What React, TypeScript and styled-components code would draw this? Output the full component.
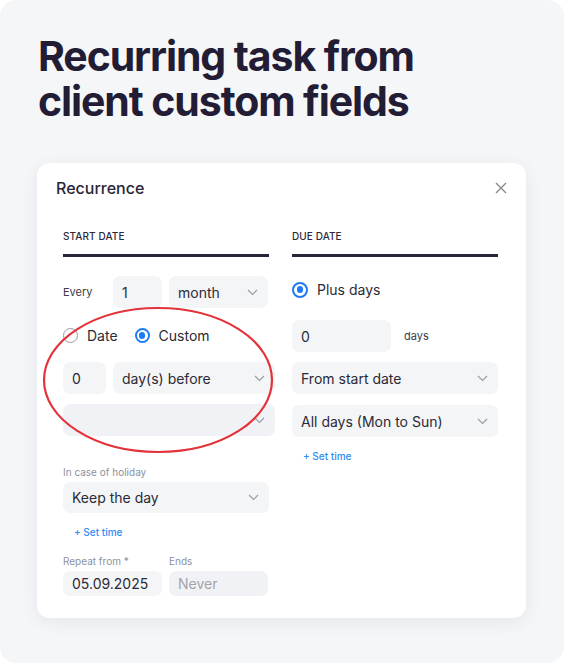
import React from "react";
import styled, { createGlobalStyle } from "styled-components";

const Global = createGlobalStyle`
  html, body { margin: 0; padding: 0; background: #ffffff; }
  body { font-family: Inter, "Noto Sans", sans-serif; -webkit-font-smoothing: antialiased; }
  * { box-sizing: border-box; }
`;

const Page = styled.div`
  width: 564px;
  height: 663px;
  background: #f5f6f8;
  border-radius: 16px;
  padding: 34px 0 0 37px;
  display: flex;
  flex-direction: column;
`;

const Title = styled.h1`
  margin: 0 0 0 1px;
  font-family: Inter, sans-serif;
  font-weight: 700;
  font-size: 41px;
  line-height: 45px;
  letter-spacing: -1.1px;
  color: #231c35;
`;

const Card = styled.div`
  position: relative;
  margin-top: 39px;
  width: 489px;
  height: 455px;
  background: #ffffff;
  border-radius: 13px;
  box-shadow: 0 4px 18px rgba(30, 30, 60, 0.07);
  padding: 0 28px 0 26px;
`;

const Header = styled.div`
  height: 50px;
  display: flex;
  align-items: center;
  justify-content: space-between;
  margin-left: -7px;
  margin-right: -11px;
`;

const CardTitle = styled.div`
  font-size: 16px;
  font-weight: 500;
  color: #272636;
`;

const Close = styled.div`
  width: 16px;
  height: 16px;
  display: flex;
  align-items: center;
  justify-content: center;
`;

const Columns = styled.div`
  display: grid;
  grid-template-columns: 206px 206px;
  column-gap: 23px;
`;

const Col = styled.div`
  display: flex;
  flex-direction: column;
`;

const ColHead = styled.div`
  padding-top: 17px;
  height: 44px;
  border-bottom: 3px solid #2a2438;
  font-size: 10px;
  font-weight: 500;
  letter-spacing: 0.1px;
  color: #2c2a3a;
  line-height: 12px;
`;

const Row = styled.div<{ $mt: number; $gap?: number }>`
  display: flex;
  align-items: center;
  margin-top: ${(p) => p.$mt}px;
  gap: ${(p) => p.$gap ?? 0}px;
`;

const SmallLabel = styled.span<{ $w?: number }>`
  font-size: 11px;
  color: #3a3a48;
  width: ${(p) => (p.$w ? `${p.$w}px` : "auto")};
  flex: none;
`;

const Field = styled.div<{ $w?: string; $h?: number; $muted?: boolean }>`
  width: ${(p) => p.$w ?? "100%"};
  height: ${(p) => p.$h ?? 32}px;
  flex: none;
  background: ${(p) => (p.$muted ? "#f1f2f5" : "#f4f5f7")};
  border-radius: 7px;
  display: flex;
  align-items: center;
  justify-content: space-between;
  padding: 0 10px 0 9px;
  font-size: 14px;
  color: ${(p) => (p.$muted ? "#a3a4ab" : "#2b2a36")};
`;

const Chevron = () => (
  <svg width="11" height="7" viewBox="0 0 11 7">
    <path d="M1 1l4.5 4.5L10 1" fill="none" stroke="#9a9ca6" strokeWidth="1.2" />
  </svg>
);

const RadioCircle = styled.span<{ $on?: boolean; $size?: number }>`
  width: ${(p) => p.$size ?? 15}px;
  height: ${(p) => p.$size ?? 15}px;
  flex: none;
  border-radius: 50%;
  border: ${(p) => (p.$on ? "2px solid #1d7cf2" : "1.5px solid #9b9b9e")};
  display: flex;
  align-items: center;
  justify-content: center;
  &::after {
    content: "";
    display: ${(p) => (p.$on ? "block" : "none")};
    width: 55%;
    height: 55%;
    border-radius: 50%;
    background: #1d7cf2;
  }
`;

const RadioText = styled.span`
  font-size: 14px;
  color: #2b2a36;
  margin-left: 9px;
`;

const Radio = styled.label`
  display: flex;
  align-items: center;
`;

const SetTime = styled.div<{ $mt: number }>`
  margin-top: ${(p) => p.$mt}px;
  margin-left: 11px;
  font-size: 10px;
  font-weight: 500;
  color: #2f8cf5;
  line-height: 12px;
`;

const Caption = styled.div<{ $mt: number }>`
  margin-top: ${(p) => p.$mt}px;
  font-size: 10px;
  color: #8d91a0;
  line-height: 12px;
`;

const Pair = styled.div<{ $mt: number }>`
  margin-top: ${(p) => p.$mt}px;
  display: grid;
  grid-template-columns: 99px 99px;
  column-gap: 7px;
  row-gap: 4px;
`;

const Ellipse = styled.svg`
  position: absolute;
  left: 4px;
  top: 143px;
  pointer-events: none;
`;

export default function App() {
  return (
    <>
      <Global />
      <Page>
        <Title>
          Recurring task from
          <br />
          client custom fields
        </Title>
        <Card>
          <Header>
            <CardTitle>Recurrence</CardTitle>
            <Close>
              <svg width="12" height="12" viewBox="0 0 12 12">
                <path d="M1 1l10 10M11 1L1 11" stroke="#8b8b8f" strokeWidth="1.4" />
              </svg>
            </Close>
          </Header>
          <Columns>
            <Col>
              <ColHead>START DATE</ColHead>
              <Row $mt={19}>
                <SmallLabel $w={50}>Every</SmallLabel>
                <Field $w="49px">1</Field>
                <Field $w="99px" style={{ marginLeft: 7 }}>
                  month <Chevron />
                </Field>
              </Row>
              <Row $mt={19} $gap={17}>
                <Radio>
                  <RadioCircle />
                  <RadioText>Date</RadioText>
                </Radio>
                <Radio>
                  <RadioCircle $on />
                  <RadioText>Custom</RadioText>
                </Radio>
              </Row>
              <Row $mt={18} $gap={7}>
                <Field $w="43px">0</Field>
                <Field $w="162px">
                  day(s) before <Chevron />
                </Field>
              </Row>
              <Row $mt={10}>
                <Field $w="212px" $muted>
                  <span />
                  <Chevron />
                </Field>
              </Row>
              <Caption $mt={30}>In case of holiday</Caption>
              <Row $mt={4}>
                <Field $h={31}>
                  Keep the day <Chevron />
                </Field>
              </Row>
              <SetTime $mt={13}>+ Set time</SetTime>
              <Pair $mt={17}>
                <Caption $mt={0}>Repeat from *</Caption>
                <Caption $mt={0}>Ends</Caption>
                <Field $h={25}>05.09.2025</Field>
                <Field $h={25} $muted>
                  Never
                </Field>
              </Pair>
            </Col>
            <Col>
              <ColHead>DUE DATE</ColHead>
              <Row $mt={24}>
                <Radio>
                  <RadioCircle $on $size={16} />
                  <RadioText>Plus days</RadioText>
                </Radio>
              </Row>
              <Row $mt={22} $gap={13}>
                <Field $w="99px">0</Field>
                <SmallLabel>days</SmallLabel>
              </Row>
              <Row $mt={10}>
                <Field>
                  From start date <Chevron />
                </Field>
              </Row>
              <Row $mt={11}>
                <Field>
                  All days (Mon to Sun) <Chevron />
                </Field>
              </Row>
              <SetTime $mt={13}>+ Set time</SetTime>
            </Col>
          </Columns>
          <Ellipse width="234" height="150" viewBox="0 0 234 150">
            <ellipse cx="117" cy="74" rx="114" ry="72" fill="none" stroke="#e2333a" strokeWidth="2.2" />
          </Ellipse>
        </Card>
      </Page>
    </>
  );
}
